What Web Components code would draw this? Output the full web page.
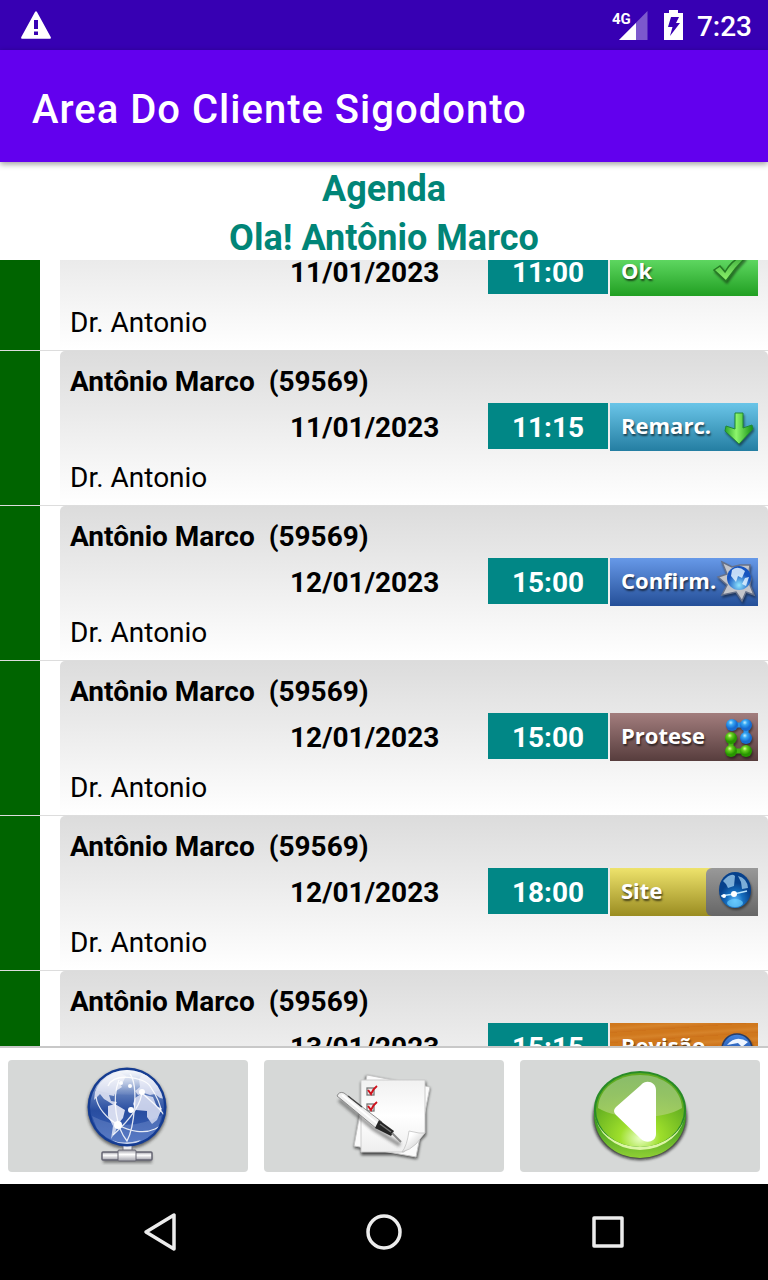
<!DOCTYPE html>
<html lang="pt-BR">
<head>
<meta charset="utf-8">
<meta name="viewport" content="width=device-width, initial-scale=1">
<title>Area Do Cliente Sigodonto</title>
<style>
html, body { height: 100%; }
body { margin: 0; background: #fff; color: #000; font-family: Roboto, sans-serif; font-size: 28px; }
</style>
</head>
<body>
<client-app>
  <status-bar slot="top">7:23</status-bar>
  <app-bar slot="top">Area Do Cliente Sigodonto</app-bar>
  <page-heading slot="top"><h1>Agenda</h1><h2>Ola! Antônio Marco</h2></page-heading>
  <agenda-list offset="64">
    <agenda-item date="11/01/2023" time="11:00" kind="ok" label="Ok"></agenda-item>
    <agenda-item date="11/01/2023" time="11:15" kind="remarc" label="Remarc."></agenda-item>
    <agenda-item date="12/01/2023" time="15:00" kind="confirm" label="Confirm."></agenda-item>
    <agenda-item date="12/01/2023" time="15:00" kind="protese" label="Protese"></agenda-item>
    <agenda-item date="12/01/2023" time="18:00" kind="site" label="Site"></agenda-item>
    <agenda-item date="13/01/2023" time="15:15" kind="revisao" label="Revisão"></agenda-item>
  </agenda-list>
  <tool-bar slot="bottom"></tool-bar>
  <nav-bar slot="bottom"></nav-bar>
</client-app>

<script>
function define(name, html, setup) {
  const template = document.createElement('template');
  template.innerHTML = html;
  customElements.define(name, class extends HTMLElement {
    connectedCallback() {
      if (this.shadowRoot) return;
      const root = this.attachShadow({ mode: 'open' });
      root.append(template.content.cloneNode(true));
      if (setup) setup(this, root);
    }
  });
}

define('client-app', `
<style>
:host { display: flex; flex-direction: column; height: 100vh; }
main { flex: 1; min-height: 0; display: flex; flex-direction: column; }
</style>
<slot name="top"></slot>
<main><slot></slot></main>
<slot name="bottom"></slot>`);

define('status-bar', `
<style>
:host { display: flex; align-items: center; flex: none; height: 50px; padding: 0 16px 0 20px; background: #3700b3; color: #fff; font-size: 28px; font-weight: 500; }
.warn { margin-right: auto; }
.battery { margin: 0 14px 0 16px; }
svg { display: block; }
time { line-height: 48px; padding-top: 4px; }
</style>
<svg class="warn" width="32" height="28" viewBox="0 0 32 28" role="img" aria-label="Aviso"><path fill="#fff" fill-rule="evenodd" d="M15 .9Q16 -.5 17 .9L30.7 26Q31.300 27.700 30 27.700H2Q.7 27.700 1.300 26ZM14 9V18H18V9ZM14 20.500V24H18V20.500Z"/></svg>
<svg width="36" height="30" viewBox="0 0 36 30" role="img" aria-label="4G"><path d="M35.500 1V30H7Z" fill="#fff" opacity=".35"/><path d="M24 13V30H7Z" fill="#fff"/><text x="0" y="14" font-family="Roboto, sans-serif" font-size="15" font-weight="700" fill="#fff">4G</text></svg>
<svg class="battery" width="19" height="30" viewBox="0 0 19 30" role="img" aria-label="Bateria"><path fill="#fff" fill-rule="evenodd" d="M5 0H14V3H19V30H0V3H5ZM7 7L4 17H8.500L6 26L16 13H12L15 7Z"/></svg>
<time><slot></slot></time>`);

define('app-bar', `
<style>
:host { display: block; flex: none; background: #6200ee; color: #fff; padding: 4px 32px 0; font-size: 40px; font-weight: 500; line-height: 112px; height: 112px; box-shadow: 0 2px 6px rgba(0,0,0,.4); position: relative; z-index: 1; letter-spacing: 1px; box-sizing: border-box; }
</style><slot></slot>`);

define('page-heading', `
<style>
:host { display: block; flex: none; text-align: center; color: #018577; }
::slotted(*) { margin: 0; padding-top: 3px; box-sizing: border-box; font-size: 36px; font-weight: 700; line-height: 48px; height: 49px; }
</style><slot></slot>`);

define('agenda-list', `
<style>
:host { display: block; flex: 1; min-height: 0; overflow-y: auto; scrollbar-width: none; }
</style><slot></slot>`, el => {
  // Lines scrolled fully out of the list are hidden, so only visible ones are exposed.
  const refresh = () => {
    const view = el.getBoundingClientRect();
    for (const item of el.children) {
      for (const line of item.shadowRoot.querySelectorAll('.line')) {
        const box = line.getBoundingClientRect();
        line.style.visibility = box.bottom - 12 <= view.top || box.top >= view.bottom ? 'hidden' : '';
      }
    }
  };
  el.addEventListener('scroll', refresh);
  requestAnimationFrame(() => {
    el.scrollTop = Number(el.getAttribute('offset'));
    refresh();
  });
});

define('agenda-item', `
<style>
:host { display: flex; gap: 20px; border-bottom: 1px solid #ddd; }
.mark { width: 40px; background: #006400; }
.card { flex: 1; padding: 10px 10px 0; height: 154px; box-sizing: border-box; border-radius: 5px 5px 0 0; background: linear-gradient(#dcdcdc, #fff); }
.name { font-weight: 700; line-height: 42px; height: 42px; white-space: pre; }
.slot { display: flex; justify-content: flex-end; }
.date { width: 198px; font-weight: 700; line-height: 50px; }
.time { width: 120px; height: 46px; margin-right: 2px; background: #018786; color: #fff; font-weight: 700; text-align: center; line-height: 50px; }
.doctor { line-height: 50px; }
</style>
<div class="mark"></div>
<div class="card">
  <div class="name line">Antônio Marco  (59569)</div>
  <div class="slot line"><time class="date"></time><time class="time"></time><action-badge></action-badge></div>
  <div class="doctor line">Dr. Antonio</div>
</div>`, (el, root) => {
  root.querySelector('.date').textContent = el.getAttribute('date');
  root.querySelector('.time').textContent = el.getAttribute('time');
  const badge = root.querySelector('action-badge');
  badge.setAttribute('kind', el.getAttribute('kind'));
  badge.textContent = el.getAttribute('label');
});

const badgeArt = {
  ok: `<defs><linearGradient id="g" x2="0" y2="1"><stop stop-color="#3fae3d"/><stop offset="1" stop-color="#8ff56c"/></linearGradient></defs>
    <path d="M-4 22L2 18L7 24Q13 13 24 8L27 10Q17 20 8 33Z" fill="url(#g)" stroke="#257a24" stroke-width="1.500"/>`,
  remarc: `<defs><linearGradient id="g" x2="1"><stop stop-color="#2ba52b"/><stop offset=".4" stop-color="#8df56c"/><stop offset="1" stop-color="#149014"/></linearGradient></defs>
    <path d="M17 10H25V25L34 22L35 26L21 41L7 28L8 23L17 26Z" fill="url(#g)" stroke="#208a35"/>`,
  confirm: `<defs><radialGradient id="g" cy=".8"><stop stop-color="#8fe6ff"/><stop offset="1" stop-color="#1754bf"/></radialGradient></defs>
    <path d="M4 4L14 9L22 7L32 7L31 14L33 21L32 27L36 37L28 34L24 43L18 34L4 37L9 27L0 19L9 16Z" fill="#c4c5ca" stroke="#66718a" stroke-width="1.500"/>
    <circle cx="21" cy="20" r="12" fill="url(#g)"/><path d="M14 12Q20 7 27 13L24 20L20 18L18 24L13 18ZM27 20L31 19L28 28L24 26Z" fill="#e1f1ff" opacity=".85"/>`,
  protese: `<defs><radialGradient id="g" cx=".4" cy=".3"><stop stop-color="#c5f0ff"/><stop offset=".4" stop-color="#36a8f5"/><stop offset="1" stop-color="#176bd0"/></radialGradient><radialGradient id="h" cx=".4" cy=".3"><stop stop-color="#dfff99"/><stop offset=".4" stop-color="#64ce1e"/><stop offset="1" stop-color="#279600"/></radialGradient></defs>
    <path d="M13 12H28V25" fill="none" stroke="#2a91e2" stroke-width="5"/><path d="M13 25V38H28" fill="none" stroke="#43b512" stroke-width="5"/>
    <g fill="url(#g)"><circle cx="14" cy="12" r="6"/><circle cx="28" cy="12" r="6"/><circle cx="28" cy="25" r="6"/></g><g fill="url(#h)"><circle cx="13" cy="25" r="6"/><circle cx="13" cy="38" r="6"/><circle cx="28" cy="38" r="6"/></g>`,
  site: `<defs><radialGradient id="g" cy=".8"><stop stop-color="#62beff"/><stop offset=".5" stop-color="#1670c1"/><stop offset="1" stop-color="#07418c"/></radialGradient></defs>
    <ellipse cx="19" cy="22" rx="16" ry="18" fill="url(#g)"/><path d="M7 13Q15 4 19 8L18 18L12 20L10 16ZM22 8Q31 10 32 20L26 21L25 14Z" fill="#a4d2f0" opacity=".75"/><path d="M5 28L18 26L31 23" fill="none" stroke="#b9e5ff" stroke-width="1.500"/><circle cx="18" cy="26" r="3" fill="#fff"/><circle cx="8" cy="28" r="2" fill="#fff"/><ellipse cx="19" cy="35" rx="8" ry="4" fill="#6acfff" opacity=".7"/>`,
  revisao: `<defs><linearGradient id="g" x2="0" y2="1"><stop stop-color="#4385df"/><stop offset="1" stop-color="#143b91"/></linearGradient></defs>
    <circle cx="19" cy="26" r="15" fill="url(#g)" stroke="#263c68" stroke-width="1.500"/><path d="M9 22Q18 11 30 19L24 24L20 20Z" fill="#eef5ff"/>`
};

define('action-badge', `
<style>
:host { display: block; width: 148px; height: 48px; --bg: linear-gradient(#72e975, #219f22); }
:host([kind="remarc"]) { --bg: linear-gradient(#6ac5e8, #247ea2); }
:host([kind="confirm"]) { --bg: linear-gradient(#6799e8, #244f98); }
:host([kind="protese"]) { --bg: linear-gradient(#a27d7d, #573d3d); }
:host([kind="site"]) { --bg: linear-gradient(#eee36c, #9a8c21); }
:host([kind="revisao"]) { --bg: repeating-linear-gradient(176deg, #d0781d 0 3px, #d6832a 6px, #cc7119 10px); }
button { display: flex; align-items: center; width: 100%; height: 100%; margin: 0; padding: 0 0 0 11px; border: 0; background: var(--bg); color: #fff; font: 700 22px/44px "Open Sans", sans-serif; text-align: left; text-shadow: 1px 2px 2px rgba(0,0,0,.6); }
.text { height: 48px; white-space: nowrap; flex: 1; width: 0; }
svg { display: block; flex: none; overflow: visible; filter: drop-shadow(1px 2px 1px rgba(0,0,0,.45)); }
.icon { width: 40px; height: 48px; }
:host([kind="site"]) .icon { width: 52px; padding-left: 10px; box-sizing: border-box; background: linear-gradient(#999, #666); border-radius: 6px 0 0 6px; }
</style>
<button type="button"><span class="text"><slot></slot></span><span class="icon"></span></button>`, (el, root) => {
  root.querySelector('.icon').innerHTML = `<svg width="40" height="48" viewBox="0 0 40 48" aria-hidden="true">${badgeArt[el.getAttribute('kind')]}</svg>`;
});

define('tool-bar', `
<style>
:host { display: flex; flex: none; gap: 16px; padding: 12px 8px; background: #fff; border-top: 2px solid #c8c8c8; }
button { flex: 1; height: 112px; padding: 0; border: 0; border-radius: 4px; background: #d6d8d7; display: flex; align-items: center; justify-content: center; }
svg { display: block; }
</style>
<button type="button" aria-label="Site">
<svg width="96" height="104" viewBox="0 0 96 104">
  <defs>
    <linearGradient id="sea" x2="0" y2="1"><stop stop-color="#e9eef9"/><stop offset=".28" stop-color="#6683bf"/><stop offset=".55" stop-color="#284da0"/><stop offset="1" stop-color="#3f66bb"/></linearGradient>
    <linearGradient id="pipe" x2="0" y2="1"><stop stop-color="#9c9ca5"/><stop offset=".4" stop-color="#fff"/><stop offset="1" stop-color="#a0a0a9"/></linearGradient>
    <linearGradient id="shine" x2="0" y2="1"><stop stop-color="#fff"/><stop offset="1" stop-color="#fff" stop-opacity=".1"/></linearGradient>
    <filter id="soft" x="-20%" y="-20%" width="140%" height="140%"><feGaussianBlur stdDeviation="1.500"/></filter>
    <clipPath id="ball"><circle cx="47" cy="43" r="37"/></clipPath>
  </defs>
  <circle cx="47" cy="45" r="40" fill="#222" opacity=".6" filter="url(#soft)"/>
  <rect x="43" y="80" width="9" height="13" fill="#e9e9ed" stroke="#777783"/>
  <rect x="23" y="90" width="49" height="9" rx="1" fill="#222" opacity=".5" filter="url(#soft)"/>
  <rect x="22" y="88" width="50" height="8" rx="1" fill="url(#pipe)" stroke="#666673" stroke-width="1.500"/>
  <rect x="38" y="86" width="18" height="11" rx="1" fill="url(#pipe)" stroke="#666673"/>
  <circle cx="47" cy="43" r="39.500" fill="#153c92"/>
  <circle cx="47" cy="43" r="37" fill="url(#sea)"/>
  <g clip-path="url(#ball)">
    <path d="M15 28Q19 17 29 12L39 8L46 12L43 18L38 17L42 23L36 27L34 32L29 31L31 37L37 38L35 42L29 38L24 35L20 30L14 36Z" fill="#e5e8f5" opacity=".85"/>
    <path d="M28 42L35 40L45 46L43 54L38 60L35 69L31 75L33 62L28 52Z" fill="#e8eaf7" opacity=".9"/>
    <path d="M59 15L63 9L70 12L79 22L85 35L80 34L75 30L70 31L64 29L58 31L55 27L60 23ZM55 34L61 30L73 33L77 43L82 44L77 56L72 60L67 53L67 47L56 46L53 40Z" fill="#dfe3f4" opacity=".85"/>
    <path d="M12 25Q22 7 47 5Q72 7 82 26Q47 36 12 25Z" fill="url(#shine)" opacity=".65"/>
    <path d="M12 52Q47 70 82 51L77 68Q47 92 18 67Z" fill="#a2b6e5" opacity=".25"/>
    <g fill="none" stroke="#fff" stroke-width="1.300" opacity=".85"><path d="M16 33C19 55 53 75 75 65S78 44 61 28"/><path d="M39 16C31 36 37 65 47 77C54 64 59 22 50 10"/><path d="M62 26Q62 45 33 71M28 22C34 8 64 13 70 22S81 41 81 48"/></g>
    <path d="M32 76Q43 81 61 76Q54 83 43 82Z" fill="#fff" opacity=".7"/>
  </g>
  <g fill="#fff"><circle cx="38" cy="61" r="4"/><circle cx="51" cy="46" r="3"/><circle cx="62" cy="28" r="3"/><circle cx="50" cy="22" r="2"/><circle cx="41" cy="19" r="2"/></g>
</svg></button>
<button type="button" aria-label="Agenda">
<svg width="104" height="96" viewBox="0 0 104 96">
  <defs><linearGradient id="page" x2="0" y2="1"><stop stop-color="#f1f1f1"/><stop offset=".5" stop-color="#fff"/><stop offset="1" stop-color="#eee"/></linearGradient>
  <linearGradient id="curl" x2="1" y2="1"><stop offset=".3" stop-color="#fff"/><stop offset="1" stop-color="#bbb"/></linearGradient></defs>
  <g fill="#111" opacity=".75" filter="url(#soft)"><path d="M29 14H94V67L74 87H29ZM34 8L98 20L85 91L22 80Z"/></g>
  <path d="M35 7L98 19L84 89L22 78Z" fill="#fbfbfb" stroke="#c5c5c5"/>
  <path d="M29 12H93V65L72 84H29Z" fill="url(#page)" stroke="#ccc"/>
  <path d="M93 65L87 65L77 63Q75 78 70 84Q78 82 84 76Z" fill="url(#curl)" stroke="#bbb" stroke-width=".7"/>
  <g fill="#eee" stroke="#777" stroke-width="1.300"><rect x="35" y="20" width="7" height="7"/><rect x="35" y="36" width="7" height="7"/></g>
  <path d="M36 22L39 26Q41 21 45 18M36 38L39 42Q41 37 45 34" fill="none" stroke="#d0101b" stroke-width="2"/>
  <path d="M7 32L42 61L68 77" fill="none" stroke="#222" stroke-width="4" opacity=".45" filter="url(#soft)"/>
  <path d="M5 28Q7 23 12 25L50 54L45 61L10 32Z" fill="#efefef" stroke="#777" stroke-width=".8"/>
  <path d="M10 27L47 57" stroke="#fff" stroke-width="2"/><path d="M16 28L30 39" stroke="#444" stroke-width="1.500"/>
  <path d="M47 52L62 63L59 68L43 60Z" fill="#252525"/><path d="M48 56L59 64" stroke="#777" stroke-width="1.500"/><path d="M60 65L69 74" stroke="#888" stroke-width="2"/>
</svg></button>
<button type="button" aria-label="Voltar">
<svg width="104" height="96" viewBox="0 0 104 96">
  <defs><radialGradient id="green" cx=".5" cy=".88" r=".65"><stop stop-color="#e9ffc6"/><stop offset=".35" stop-color="#9edf2b"/><stop offset="1" stop-color="#5fab20"/></radialGradient>
  <linearGradient id="rim" x2="0" y2="1"><stop stop-color="#2f8f27"/><stop offset=".6" stop-color="#409c20"/><stop offset="1" stop-color="#8fd034"/></linearGradient>
  <linearGradient id="gloss" x2="0" y2="1"><stop stop-color="#91bf77"/><stop offset="1" stop-color="#a9d069"/></linearGradient></defs>
  <ellipse cx="52" cy="50" rx="47" ry="42" fill="#111" opacity=".8" filter="url(#soft)"/>
  <ellipse cx="52" cy="47" rx="46" ry="43" fill="url(#rim)"/>
  <ellipse cx="52" cy="43" rx="45" ry="39" fill="#dcf5a5"/>
  <ellipse cx="52" cy="41" rx="46" ry="38" fill="#298b27"/>
  <ellipse cx="52" cy="42" rx="44" ry="37" fill="url(#green)"/>
  <path d="M10 40C11 20 30 7 52 7S93 20 94 40Q79 49 52 49T10 40Z" fill="url(#gloss)" opacity=".85"/>
  <path d="M28 39L53 17C58 11 68 14 68 22V66C68 74 58 76 53 71L28 47Q24 43 28 39Z" fill="#fff"/>
</svg></button>`);

define('nav-bar', `
<style>
:host { display: grid; grid-template-columns: repeat(3, 1fr); flex: none; height: 96px; padding: 0 48px; background: #000; }
button { display: flex; align-items: center; justify-content: center; border: 0; padding: 0; background: none; }
svg { display: block; fill: none; stroke: #ececec; stroke-width: 3.500; stroke-linejoin: round; }
</style>
<button type="button" aria-label="Voltar"><svg width="48" height="48" viewBox="0 0 48 48"><path d="M38 7V41L10 24Z"/></svg></button>
<button type="button" aria-label="Início"><svg width="48" height="48" viewBox="0 0 48 48"><circle cx="24" cy="24" r="16"/></svg></button>
<button type="button" aria-label="Recentes"><svg width="48" height="48" viewBox="0 0 48 48"><rect x="10" y="10" width="28" height="28"/></svg></button>`);
</script>
</body>
</html>
